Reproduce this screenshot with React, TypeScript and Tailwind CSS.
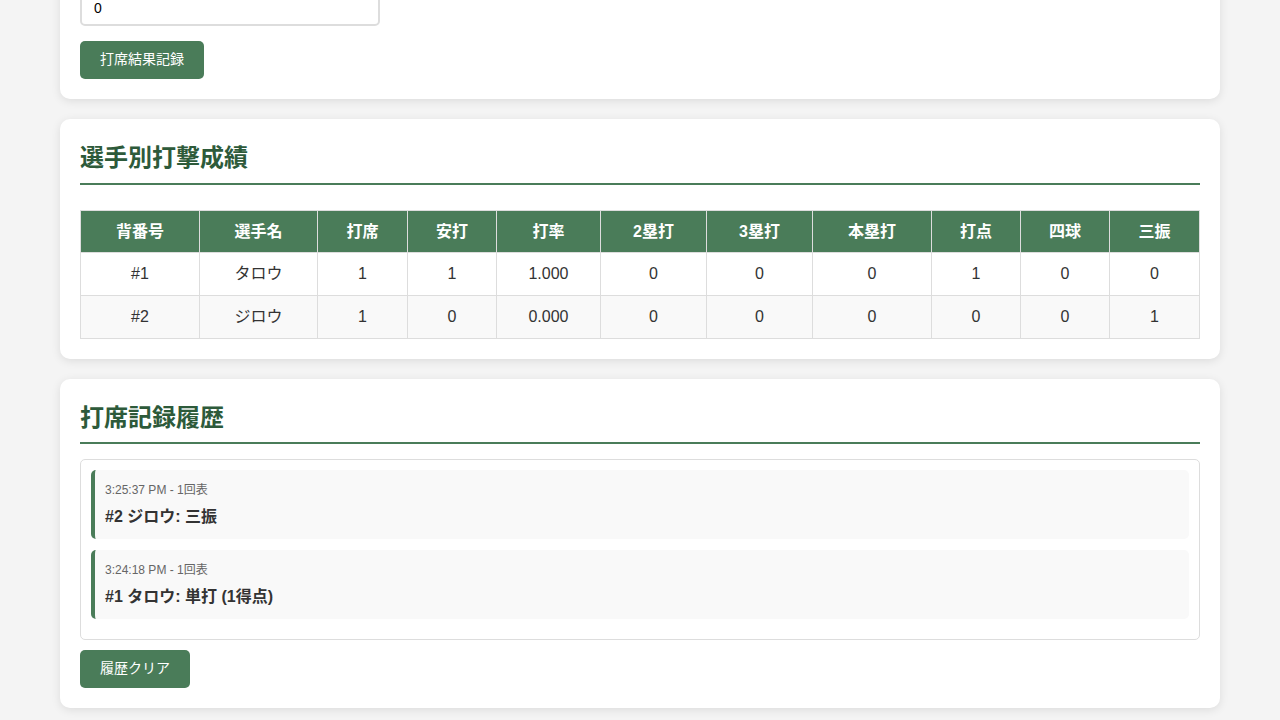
import React from "react";

const headers = ["背番号", "選手名", "打席", "安打", "打率", "2塁打", "3塁打", "本塁打", "打点", "四球", "三振"];
const widths = ["w-[119px]", "w-[118px]", "w-[90px]", "w-[89px]", "w-[104px]", "w-[106px]", "w-[106px]", "w-[119px]", "w-[89px]", "w-[89px]", "w-[90px]"];

const players = [
  ["#1", "タロウ", "1", "1", "1.000", "0", "0", "0", "1", "0", "0"],
  ["#2", "ジロウ", "1", "0", "0.000", "0", "0", "0", "0", "0", "1"],
];

const history = [
  { time: "3:25:37 PM - 1回表", text: "#2 ジロウ: 三振" },
  { time: "3:24:18 PM - 1回表", text: "#1 タロウ: 単打 (1得点)" },
];

function Card({ children }: { children: React.ReactNode }) {
  return <section className="rounded-[10px] bg-white p-5 shadow-[0_2px_10px_rgba(0,0,0,0.1)]">{children}</section>;
}

function Title({ children, className = "" }: { children: React.ReactNode; className?: string }) {
  return (
    <h2 className={`border-b-2 border-[#4a7c59] pt-px text-[24px] font-bold leading-[36px] text-[#2d5a3a] ${className}`}>
      {children}
    </h2>
  );
}

function GreenButton({ children }: { children: React.ReactNode }) {
  return (
    <button className="h-[38px] rounded-[5px] bg-[#4a7c59] px-5 pb-px text-[14px] text-white">{children}</button>
  );
}

export default function App() {
  return (
    <div
      className="h-[720px] overflow-hidden bg-[#f4f4f4] text-[#333]"
      style={{ fontFamily: '"Liberation Sans", Arial, "Noto Sans CJK JP", sans-serif' }}
    >
      <div className="mx-auto mt-[-31px] flex max-w-[1200px] flex-col gap-5 px-5">
        <Card>
          <input
            readOnly
            value="0"
            className="block h-[37px] w-[300px] rounded-[5px] border-2 border-[#ddd] px-3 text-[14px] text-black"
          />
          <div className="mt-[15px]">
            <GreenButton>打席結果記録</GreenButton>
          </div>
        </Card>

        <Card>
          <Title className="pb-[7px]">選手別打撃成績</Title>
          <table className="mt-[25px] w-full border-collapse text-[16px]">
            <thead>
              <tr className="bg-[#4a7c59] text-white">
                {headers.map((h, i) => (
                  <th key={h} className={`h-[42px] border border-[#ddd] font-bold ${widths[i]}`}>
                    {h}
                  </th>
                ))}
              </tr>
            </thead>
            <tbody>
              {players.map((row, r) => (
                <tr key={r} className={r % 2 === 1 ? "bg-[#f9f9f9]" : "bg-white"}>
                  {row.map((c, i) => (
                    <td key={i} className="h-[43px] border border-[#ddd] text-center">
                      {c}
                    </td>
                  ))}
                </tr>
              ))}
            </tbody>
          </table>
        </Card>

        <Card>
          <Title className="pb-[6px]">打席記録履歴</Title>
          <div className="mt-[15px] flex flex-col gap-[11px] rounded-[5px] border border-[#ddd] p-[10px] pb-5">
            {history.map((h) => (
              <div key={h.time} className="rounded-[5px] border-l-4 border-[#4a7c59] bg-[#f9f9f9] px-[10px] pt-[11px] pb-[11px]">
                <div className="text-[12px] leading-[18px] text-[#666]">{h.time}</div>
                <div className="mt-[7px] text-[16px] font-bold leading-[22px] text-[#333]">{h.text}</div>
              </div>
            ))}
          </div>
          <div className="mt-[10px]">
            <GreenButton>履歴クリア</GreenButton>
          </div>
        </Card>
      </div>
    </div>
  );
}
